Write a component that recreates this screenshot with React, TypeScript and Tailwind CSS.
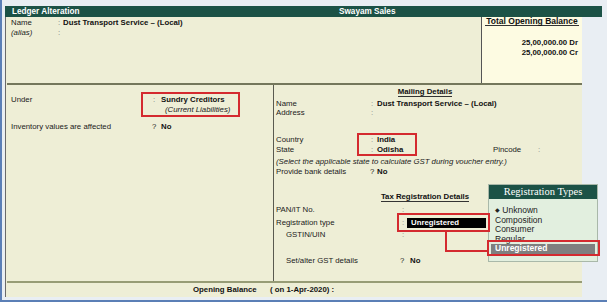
import React from "react";

export default function App() {
  return (
    <div className="relative w-[607px] h-[302px] overflow-hidden bg-[#e9eef3] font-['Liberation_Sans',Arial,sans-serif] text-[7.8px] leading-[10px] text-[#1a1a1a]">
      <div className="w-full h-full border-l-2 border-b-2 border-[#5b7fb6] pl-[3px] pt-[6px]">
        {/* header */}
        <div className="w-[597px] h-[11px] bg-[#1c5246] flex items-center text-white font-bold text-[8.2px] leading-[11px]">
          <span className="pl-[7px] w-[334px]">Ledger Alteration</span>
          <span>Swayam Sales</span>
        </div>
        {/* body */}
        <div className="w-[577px] h-[280px] bg-[#eeeed6] border-l border-[#6a6a6a] flex flex-col">
          {/* top */}
          <div className="h-[66px] flex">
            <div className="w-[475px] pl-[5px] pt-[1px]">
              <div className="flex">
                <span className="w-[47px]">Name</span>
                <span className="w-[5px] text-[#777]">:</span>
                <span className="font-bold text-[#111]">Dust Transport Service – (Local)</span>
              </div>
              <div className="flex">
                <span className="w-[47px] italic">(alias)</span>
                <span className="w-[5px] text-[#777]">:</span>
              </div>
            </div>
            <div className="w-[101px] border-l border-[#555] bg-[#fdfbe2] flex flex-col items-center">
              <span className="font-bold text-[8.5px] leading-[8px] border-b border-[#333] px-[1px] text-[#111]">
                Total Opening Balance
              </span>
              <div className="self-stretch flex flex-col items-end pr-[4px] mt-[12px] font-bold text-[#111]">
                <span>25,00,000.00 Dr</span>
                <span>25,00,000.00 Cr</span>
              </div>
            </div>
          </div>
          <div className="h-[2px] ml-[1px] bg-[#74775c]" />
          {/* middle */}
          <div className="h-[196px] flex">
            <div className="w-[267px] pt-[10px] pl-[5px]">
              <div className="flex">
                <span className="w-[142px]">Under</span>
                <span className="w-[8px] text-[#777]">:</span>
                <span className="font-bold text-[#111]">Sundry Creditors</span>
              </div>
              <div className="flex">
                <span className="w-[154px]" />
                <span className="italic">(Current Liabilities)</span>
              </div>
              <div className="flex mt-[7px]">
                <span className="w-[141px]">Inventory values are affected</span>
                <span className="w-[9px]">?</span>
                <span className="font-bold text-[#111]">No</span>
              </div>
            </div>
            <div className="w-[1px] bg-[#5a5a50]" />
            <div className="flex-1 pl-[2px] flex flex-col">
              <div className="mt-[2px] flex justify-center pr-[8px]">
                <span className="font-bold leading-[9px] border-b border-[#333] text-[#111]">Mailing Details</span>
              </div>
              <div className="flex mt-[2px] leading-[9px]">
                <span className="w-[95px]">Name</span>
                <span className="w-[6px] text-[#888]">:</span>
                <span className="font-bold text-[#111]">Dust Transport Service – (Local)</span>
              </div>
              <div className="flex leading-[9px]">
                <span className="w-[95px]">Address</span>
                <span className="w-[6px] text-[#888]">:</span>
              </div>
              <div className="flex mt-[18px]">
                <span className="w-[95px]">Country</span>
                <span className="w-[6px] text-[#888]">:</span>
                <span className="font-bold text-[#111]">India</span>
              </div>
              <div className="flex">
                <span className="w-[95px]">State</span>
                <span className="w-[6px] text-[#888]">:</span>
                <span className="w-[116px] font-bold text-[#111]">Odisha</span>
                <span className="w-[45px]">Pincode</span>
                <span className="text-[#888]">:</span>
              </div>
              <div className="mt-[2px] italic">
                (Select the applicable state to calculate GST during voucher entry.)
              </div>
              <div className="flex">
                <span className="w-[94px]">Provide bank details</span>
                <span className="w-[7px]">?</span>
                <span className="font-bold text-[#111]">No</span>
              </div>
              <div className="mt-[15px] flex justify-center pr-[8px]">
                <span className="font-bold leading-[9px] border-b border-[#333] text-[#111]">Tax Registration Details</span>
              </div>
              <div className="flex mt-[3px]">
                <span className="w-[126px]">PAN/IT No.</span>
                <span className="text-[#888]">:</span>
              </div>
              <div className="flex mt-[2px] h-[11px] items-center">
                <span className="w-[126px]">Registration type</span>
                <span className="w-[5px] text-[#888]">:</span>
                <span className="w-[79px] h-[10px] bg-black text-white font-bold pl-[4px] leading-[10px]">
                  Unregistered
                </span>
              </div>
              <div className="flex mt-[2px] leading-[9px] pl-[10px]">
                <span className="w-[116px]">GSTIN/UIN</span>
                <span className="text-[#888]">:</span>
              </div>
              <div className="flex mt-[17px] pl-[10px]">
                <span className="w-[114px]">Set/alter GST details</span>
                <span className="w-[10px]">?</span>
                <span className="font-bold text-[#111]">No</span>
              </div>
            </div>
          </div>
          <div className="h-[2px] ml-[1px] bg-[#979c76]" />
          {/* footer */}
          <div className="h-[14px] flex items-center pl-[187px] font-bold text-[#111]">
            <span className="w-[77px]">Opening Balance</span>
            <span>( on 1-Apr-2020) :</span>
          </div>
        </div>
      </div>

      {/* popup */}
      <div className="absolute left-[488px] top-[184px] w-[110px] h-[78px] bg-[#e2efdf] border border-[#a9b8a9] flex flex-col">
        <div className="h-[14px] bg-[#1c5246] text-white text-center font-['Liberation_Serif',serif] text-[10.5px] leading-[14px]">
          Registration Types
        </div>
        <div className="pt-[7px] text-[8.5px] leading-[9.5px] text-[#222]">
          <div className="pl-[6px]">
            <span className="text-[6px] align-middle">◆</span> Unknown
          </div>
          <div className="pl-[6px]">Composition</div>
          <div className="pl-[6px]">Consumer</div>
          <div className="pl-[6px]">Regular</div>
          <div className="mx-[2px] pl-[4px] bg-[#7f7f7f] text-white font-bold">Unregistered</div>
        </div>
      </div>

      {/* annotations */}
      <div className="absolute left-[141px] top-[92px] w-[99px] h-[25px] border-2 border-[#d42a2f]" />
      <div className="absolute left-[357px] top-[133px] w-[60px] h-[23px] border-2 border-[#d42a2f]" />
      <div className="absolute left-[397px] top-[213px] w-[93px] h-[19px] border-2 border-[#d42a2f]" />
      <div className="absolute left-[487px] top-[240px] w-[113px] h-[16px] border-2 border-[#d42a2f]" />
      <div className="absolute left-[445px] top-[231px] w-[2px] h-[21px] bg-[#d42a2f]" />
      <div className="absolute left-[445px] top-[250px] w-[43px] h-[2px] bg-[#d42a2f]" />
    </div>
  );
}
